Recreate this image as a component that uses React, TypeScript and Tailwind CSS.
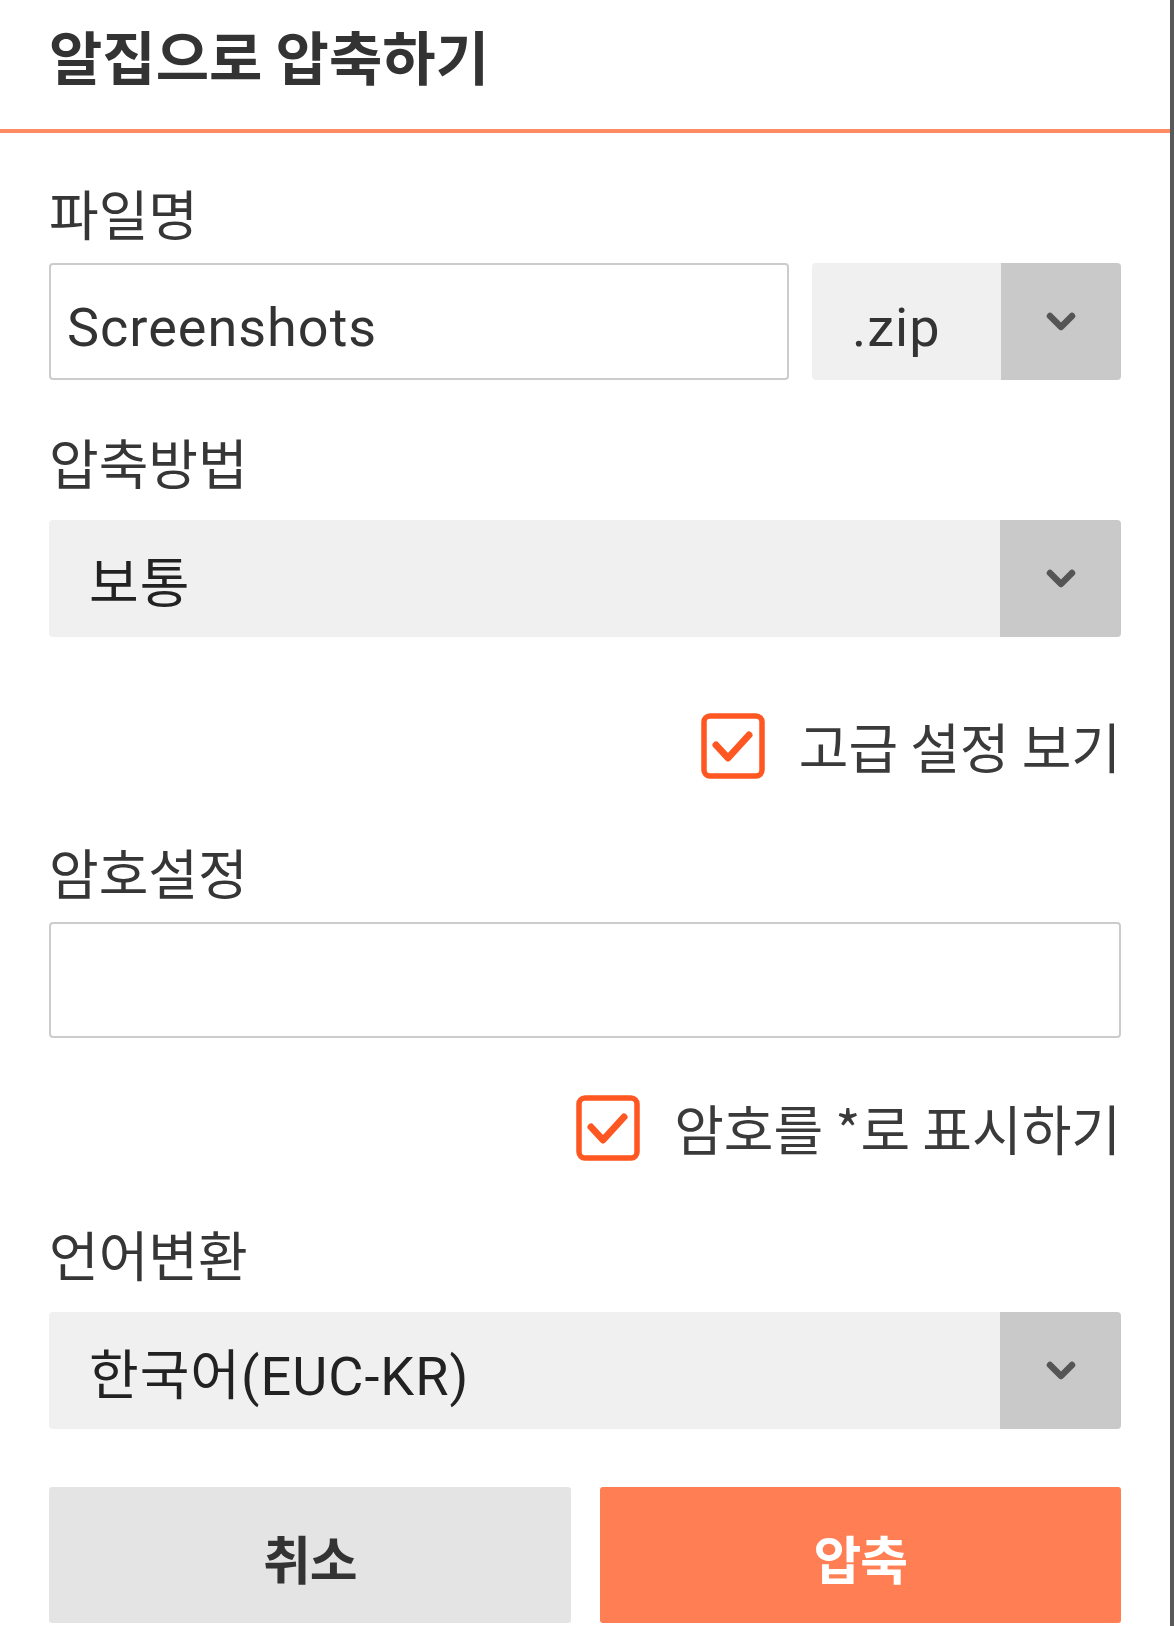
import React from "react";

const KR = { fontFamily: '"Noto Sans CJK KR", sans-serif' };
const MIX = { fontFamily: 'Roboto, "Noto Sans CJK KR", sans-serif' };

const Chevron = () => (
  <svg width="34" height="22" viewBox="0 0 34 22">
    <polyline
      points="6,5 17,16 28,5"
      fill="none"
      stroke="#555555"
      strokeWidth="6.5"
      strokeLinecap="round"
      strokeLinejoin="round"
    />
  </svg>
);

const Check = () => (
  <svg width="64" height="66" viewBox="0 0 64 66">
    <rect x="3" y="3" width="58" height="60" rx="6" fill="white" stroke="#ff5722" strokeWidth="5.5" />
    <polyline
      points="15,32 27,45 48,22"
      fill="none"
      stroke="#ff5722"
      strokeWidth="7"
      strokeLinecap="round"
      strokeLinejoin="round"
    />
  </svg>
);

const Label = ({ children, mt }: { children: React.ReactNode; mt: string }) => (
  <div
    className={`${mt} h-[52px] text-[54px] leading-none text-[#363636]`}
    style={KR}
  >
    {children}
  </div>
);

const Select = ({ text, mt }: { text: string; mt: string }) => (
  <div className={`${mt} flex h-[117px] w-full overflow-hidden rounded-[4px] bg-[#f0f0f0]`}>
    <div
      className="flex flex-1 items-center pl-[40px] pt-[12px] text-[54px] leading-none tracking-[1px] text-[#222]"
      style={MIX}
    >
      {text}
    </div>
    <div className="flex w-[121px] items-center justify-center bg-[#c9c9c9]">
      <Chevron />
    </div>
  </div>
);

export default function App() {
  return (
    <div className="flex h-[1626px] w-[1174px] overflow-hidden bg-white">
      <div className="flex w-[1170px] flex-col bg-white">
        <div className="h-[129px] pl-[49px] pt-[26px]">
          <div
            className="text-[58px] font-bold leading-none text-[#333]"
            style={KR}
          >
            알집으로 압축하기
          </div>
        </div>
        <div className="h-[4px] w-full bg-[#ff8a63]" />

        <div className="flex flex-col px-[49px]">
          <Label mt="mt-[53px]">파일명</Label>

          <div className="mt-[25px] flex h-[117px] gap-[23px]">
            <div
              className="flex w-[740px] items-center rounded-[4px] border-2 border-[#cccccc] bg-white pl-[16px] pt-[12px] text-[54px] leading-none tracking-[1px] text-[#333]"
              style={MIX}
            >
              Screenshots
            </div>
            <div className="flex flex-1 overflow-hidden rounded-[4px] bg-[#f0f0f0]">
              <div
                className="flex flex-1 items-center pl-[40px] pt-[12px] text-[54px] leading-none tracking-[1px] text-[#333]"
                style={MIX}
              >
                .zip
              </div>
              <div className="flex w-[120px] items-center justify-center bg-[#c9c9c9]">
                <Chevron />
              </div>
            </div>
          </div>

          <Label mt="mt-[55px]">압축방법</Label>
          <Select text="보통" mt="mt-[33px]" />

          <div className="mt-[76px] flex h-[66px] items-center justify-end gap-[34px]">
            <Check />
            <span
              className="text-[54px] leading-none text-[#3a3a3a]"
              style={KR}
            >
              고급 설정 보기
            </span>
          </div>

          <Label mt="mt-[66px]">암호설정</Label>
          <div className="mt-[25px] h-[116px] w-full rounded-[4px] border-2 border-[#cccccc] bg-white" />

          <div className="mt-[57px] flex h-[66px] items-center justify-end gap-[34px]">
            <Check />
            <span
              className="text-[54px] leading-none text-[#3a3a3a]"
              style={KR}
            >
              암호를 *로 표시하기
            </span>
          </div>

          <Label mt="mt-[66px]">언어변환</Label>
          <Select text="한국어(EUC-KR)" mt="mt-[33px]" />

          <div className="mt-[58px] flex h-[136px] gap-[29px]">
            <div
              className="flex flex-1 items-center justify-center rounded-[3px] bg-[#e4e4e4] pt-[6px] text-[52px] font-bold leading-none tracking-[-1px] text-[#333]"
              style={KR}
            >
              취소
            </div>
            <div
              className="flex flex-1 items-center justify-center rounded-[3px] bg-[#ff7e54] pt-[6px] text-[52px] font-bold leading-none tracking-[-1px] text-white"
              style={KR}
            >
              압축
            </div>
          </div>
        </div>
      </div>
      <div className="h-full w-[4px] bg-[#595959]" />
    </div>
  );
}
